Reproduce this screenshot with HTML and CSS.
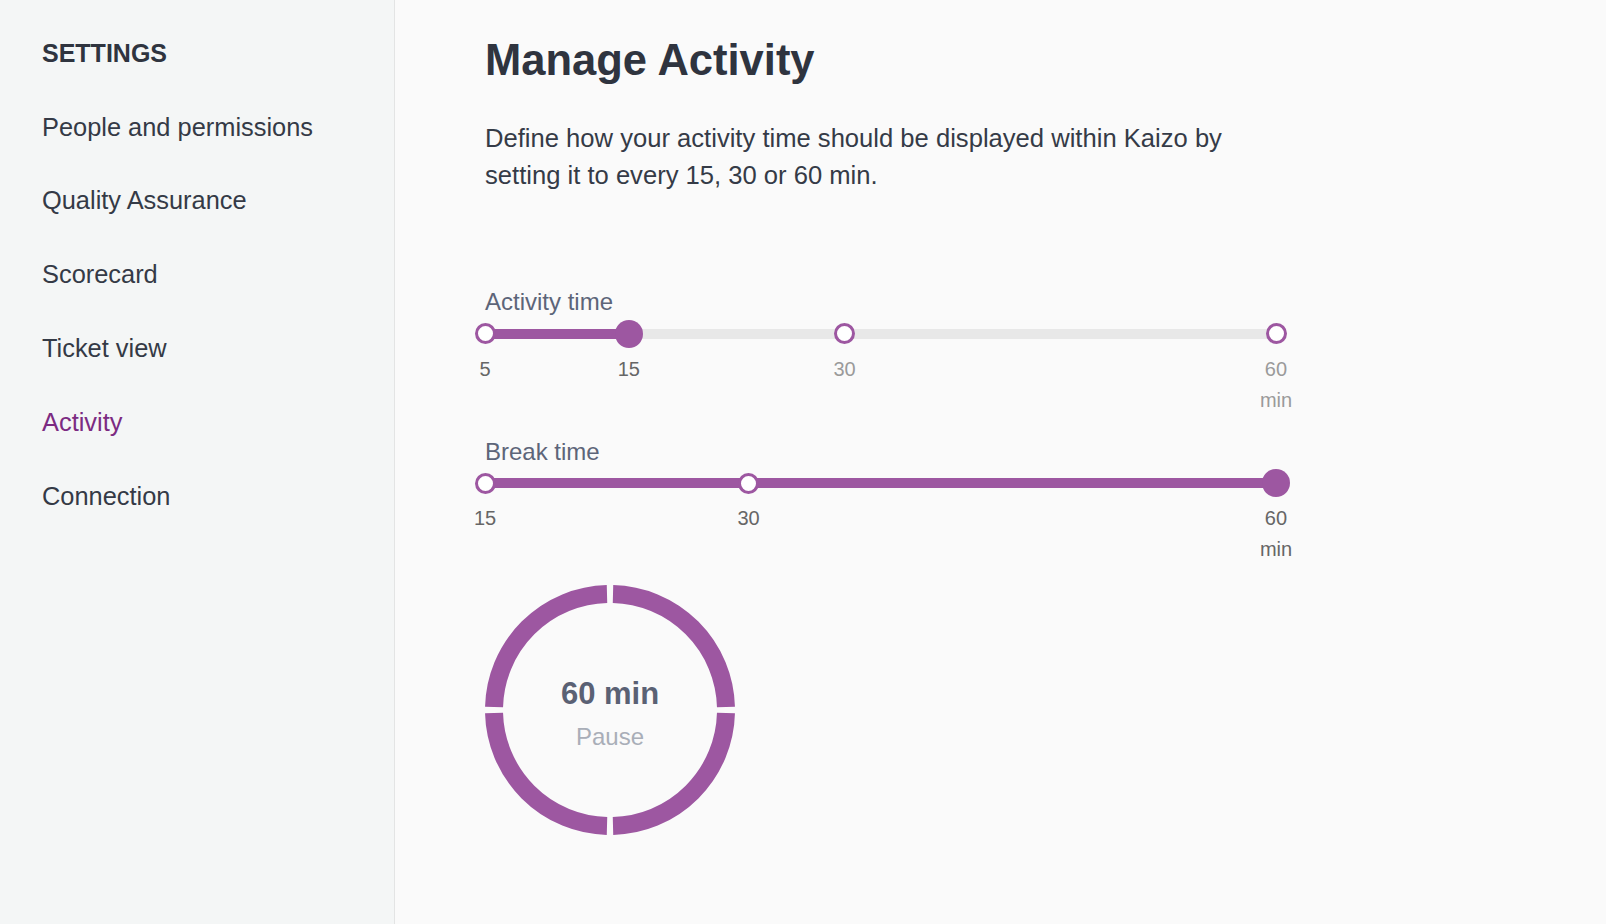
FILE: index.html
```html
<!DOCTYPE html>
<html lang="en">
<head>
<meta charset="utf-8">
<title>Manage Activity</title>
<link rel="stylesheet" href="styles.css">
</head>
<body>
<div class="app">
  <aside class="sidebar">
    <div class="sidebar-title">SETTINGS</div>
    <nav class="nav">
      <a class="nav-item">People and permissions</a>
      <a class="nav-item">Quality Assurance</a>
      <a class="nav-item">Scorecard</a>
      <a class="nav-item">Ticket view</a>
      <a class="nav-item active">Activity</a>
      <a class="nav-item">Connection</a>
    </nav>
  </aside>
  <main class="main">
    <h1 class="title">Manage Activity</h1>
    <p class="intro">Define how your activity time should be displayed within Kaizo by setting it to every 15, 30 or 60 min.</p>

    <section class="sliders">
      <div class="slider">
        <div class="slider-label">Activity time</div>
        <div class="track">
          <div class="rail"></div>
          <div class="fill" style="width:18.18%"></div>
          <span class="knob" style="left:0%"></span>
          <span class="knob selected" style="left:18.18%"></span>
          <span class="knob" style="left:45.45%"></span>
          <span class="knob" style="left:100%"></span>
        </div>
        <div class="ticks">
          <span class="tick" style="left:0%">5</span>
          <span class="tick" style="left:18.18%">15</span>
          <span class="tick muted" style="left:45.45%">30</span>
          <span class="tick muted" style="left:100%">60<span class="unit">min</span></span>
        </div>
      </div>

      <div class="slider">
        <div class="slider-label">Break time</div>
        <div class="track">
          <div class="rail"></div>
          <div class="fill" style="width:100%"></div>
          <span class="knob" style="left:0%"></span>
          <span class="knob" style="left:33.33%"></span>
          <span class="knob selected" style="left:100%"></span>
        </div>
        <div class="ticks">
          <span class="tick" style="left:0%">15</span>
          <span class="tick" style="left:33.33%">30</span>
          <span class="tick" style="left:100%">60<span class="unit">min</span></span>
        </div>
      </div>
    </section>

    <div class="ring">
      <svg class="ring-svg" width="250" height="250" viewBox="0 0 250 250" aria-hidden="true">
        <g fill="none" stroke="#9d57a1" stroke-width="18">
          <path d="M128 9.04 A116 116 0 0 1 240.96 122"/>
          <path d="M240.96 128 A116 116 0 0 1 128 240.96"/>
          <path d="M122 240.96 A116 116 0 0 1 9.04 128"/>
          <path d="M9.04 122 A116 116 0 0 1 122 9.04"/>
        </g>
      </svg>
      <div class="ring-value">60 min</div>
      <div class="ring-caption">Pause</div>
    </div>
  </main>
</div>
</body>
</html>
```

FILE: styles.css
```css
* {
  box-sizing: border-box;
}

html, body {
  margin: 0;
  padding: 0;
  height: 100%;
}

body {
  font-family: "Liberation Sans", Arial, sans-serif;
  background: #fafafa;
  color: #343a46;
}

.app {
  display: flex;
  min-height: 924px;
}

.sidebar {
  width: 395px;
  flex: 0 0 395px;
  background: #f4f6f6;
  border-right: 1px solid #e3e4e4;
  padding: 38px 0 0 42px;
}

.sidebar-title {
  font-size: 25px;
  line-height: 30px;
  font-weight: 700;
  color: #2f343f;
}

.nav {
  display: flex;
  flex-direction: column;
  gap: 43.8px;
  margin-top: 43.6px;
}

.nav-item {
  font-size: 25.4px;
  line-height: 30px;
  color: #343a46;
  text-decoration: none;
}

.nav-item.active {
  color: #7c2b82;
}

.main {
  flex: 1;
  padding: 34px 0 0 90px;
  background: #fafafa;
}

.title {
  margin: 0;
  font-size: 43.5px;
  line-height: 52px;
  font-weight: 700;
  color: #2f343f;
}

.intro {
  margin: 34px 0 0;
  width: 790px;
  font-size: 25.6px;
  line-height: 37px;
  color: #353b47;
}

.sliders {
  display: flex;
  flex-direction: column;
  gap: 22.4px;
  margin-top: 94px;
  width: 791px;
}

.slider-label {
  font-size: 24px;
  line-height: 28px;
  color: #5d6579;
}

.track {
  position: relative;
  height: 28px;
  margin-top: 3.5px;
}

.rail,
.fill {
  position: absolute;
  left: 0;
  top: 9px;
  height: 10px;
}

.rail {
  right: 0;
  background: #e8e8e8;
}

.fill {
  background: #9d57a1;
}

.knob {
  position: absolute;
  top: 14px;
  width: 21px;
  height: 21px;
  margin: -10.5px 0 0 -10.5px;
  border-radius: 50%;
  background: #ffffff;
  border: 3px solid #9d57a1;
}

.knob.selected {
  width: 28px;
  height: 28px;
  margin: -14px 0 0 -14px;
  background: #9d57a1;
  border: none;
}

.ticks {
  position: relative;
  height: 62px;
  margin-top: 6px;
}

.tick {
  position: absolute;
  top: 0;
  transform: translateX(-50%);
  font-size: 20px;
  line-height: 31px;
  color: #666666;
  text-align: center;
}

.tick.muted {
  color: #9a9a9a;
}

.unit {
  display: block;
}

.ring {
  position: relative;
  width: 250px;
  height: 250px;
  margin-top: 20px;
  display: flex;
  flex-direction: column;
  align-items: center;
  justify-content: center;
}

.ring-svg {
  position: absolute;
  left: 0;
  top: 0;
}

.ring-value {
  position: relative;
  font-size: 31px;
  line-height: 38px;
  font-weight: 700;
  color: #5a6174;
  margin-top: 7px;
}

.ring-caption {
  position: relative;
  font-size: 24px;
  line-height: 32px;
  color: #a9aeb8;
  margin-top: 8px;
}
```
